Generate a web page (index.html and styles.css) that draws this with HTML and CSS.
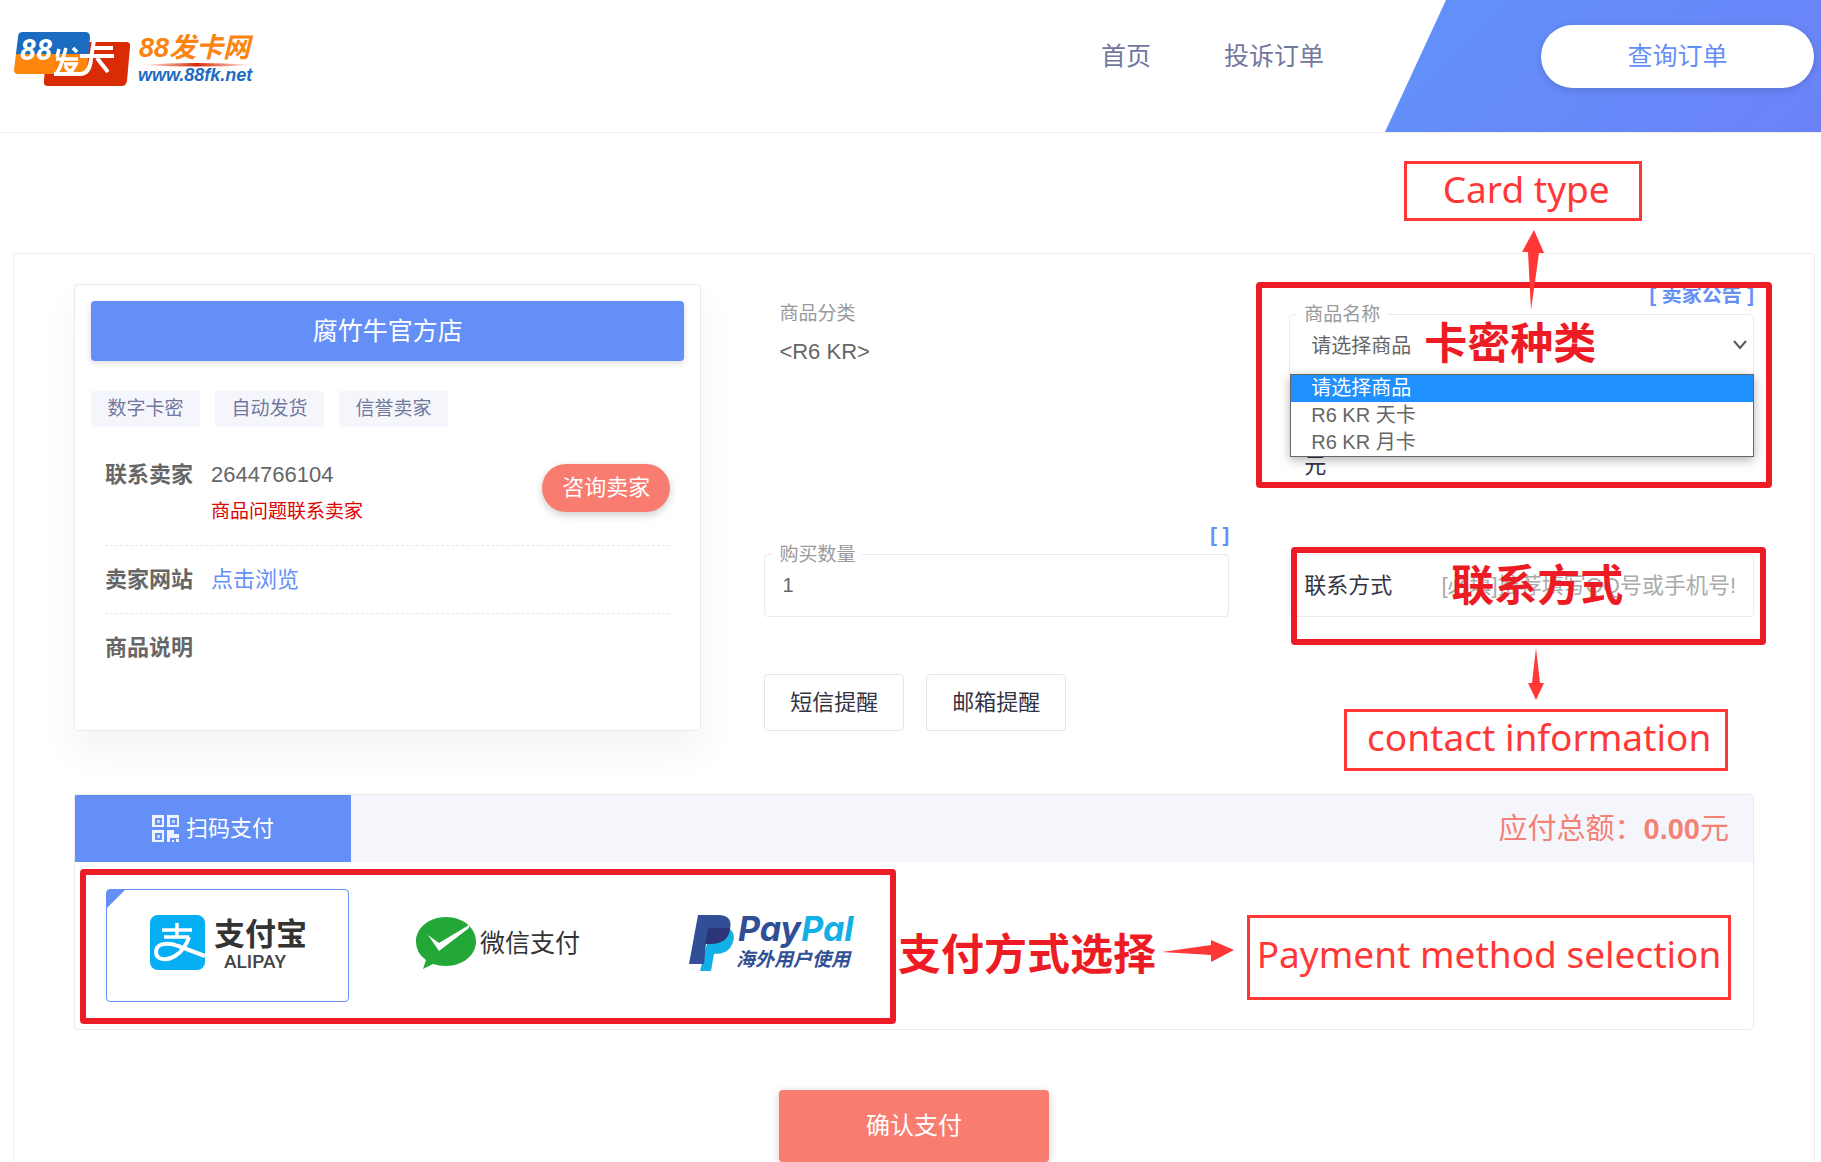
FILE: index.html
```html
<!DOCTYPE html>
<html lang="zh-CN">
<head>
  <meta charset="UTF-8">
  <meta name="viewport" content="width=device-width, initial-scale=1">
  <title>88发卡网</title>
  <link rel="stylesheet" href="styles.css">
</head>
<body>
  <header class="header">
    <a class="logo" href="#">
      <svg width="244" height="58" viewBox="0 0 244 58" role="img" aria-label="88发卡网">
        <defs>
          <linearGradient id="logo-line">
            <stop offset="0" stop-color="#fff"/>
            <stop offset="0.5" stop-color="#d92b04"/>
            <stop offset="1" stop-color="#fff"/>
          </linearGradient>
          <clipPath id="logo-tile"><path d="M9 2h62q5 0 5 5l-3 33q0 4-5 4H4q-4 0-4-4L4 7q0-5 5-5z"/></clipPath>
        </defs>
        <path d="M41 12h71q5 0 4 5l-3 34q-1 5-5 5H34q-5 0-4-5l2-28z" fill="#d92b04"/>
        <g clip-path="url(#logo-tile)">
          <path d="M0 0h80v24H0z" fill="#1b6cc0"/>
          <path d="M0 24h80v22H0z" fill="#ff860d"/>
        </g>
        <text class="logo-num" x="6" y="30">88</text>
        <path d="M45 19l-2 8M52 18l-4 14q-2 7-6 12M42 29h22M50 34h12q-3 7-10 10M51 36q4 6 10 8M59 18l4 4" fill="none" stroke="#fff" stroke-width="3.500"/>
        <path d="M80 10l-3 19q-1 14-10 15H40M77 18h22M66 26h34M83 28l11 14" fill="none" stroke="#fff" stroke-width="4"/>
        <text class="logo-name" x="125" y="27">88发卡网</text>
        <path d="M126 35q55-4 114 0q-58 3-114 0z" fill="url(#logo-line)"/>
        <text class="logo-url" x="124" y="51">www.88fk.net</text>
      </svg>
    </a>
    <nav class="nav">
      <a href="#">首页</a>
      <a href="#">投诉订单</a>
    </nav>
    <div class="header-side">
      <a class="query-btn" href="#">查询订单</a>
    </div>
  </header>

  <main class="main">
    <div class="order">
      <section class="seller">
        <h1 class="seller-name">腐竹牛官方店</h1>
        <div class="tags">
          <span class="tag">数字卡密</span>
          <span class="tag">自动发货</span>
          <span class="tag">信誉卖家</span>
        </div>
        <div class="info">
          <div class="info-row">
            <b>联系卖家</b>
            <div class="info-text">
              <span>2644766104</span>
              <small>商品问题联系卖家</small>
            </div>
            <button class="chat-btn" type="button">咨询卖家</button>
          </div>
          <div class="info-row">
            <b>卖家网站</b>
            <a href="#">点击浏览</a>
          </div>
          <div class="info-row">
            <b>商品说明</b>
          </div>
        </div>
      </section>

      <form class="fields" id="order-form">
        <div class="cell cell-top category">
          <span class="caption">商品分类</span>
          <span>&lt;R6 KR&gt;</span>
        </div>

        <div class="cell cell-top">
          <a class="notice" href="#">[ 卖家公告 ]</a>
          <div class="field">
            <label class="field-label" for="goods">商品名称</label>
            <select id="goods">
              <option>请选择商品</option>
              <option>R6 KR 天卡</option>
              <option>R6 KR 月卡</option>
            </select>
            <svg class="chevron" width="16" height="10" viewBox="0 0 16 10"><path d="M2 1l6 7 6-7" fill="none" stroke="#555" stroke-width="2"/></svg>
            <ul class="menu">
              <li class="active">请选择商品</li>
              <li>R6 KR 天卡</li>
              <li>R6 KR 月卡</li>
            </ul>
          </div>
          <div class="price">元</div>

          <div class="frame frame-goods"></div>
          <strong class="mark mark-goods">卡密种类</strong>
          <svg class="arrow arrow-goods" width="24" height="80" viewBox="0 0 24 80"><path d="M12 0l10 23h-5L9 80 6 22H0z"/></svg>
          <div class="note note-goods">Card type</div>
        </div>

        <div class="cell">
          <a class="notice" href="#">[ ]</a>
          <div class="field">
            <label class="field-label" for="count">购买数量</label>
            <input id="count" type="text" value="1">
          </div>
        </div>

        <div class="cell cell-contact">
          <div class="field field-inline">
            <label for="contact">联系方式</label>
            <input id="contact" type="text" placeholder="[必填]推荐填写QQ号或手机号!">
          </div>

          <div class="frame frame-contact"></div>
          <strong class="mark mark-contact">联系方式</strong>
          <svg class="arrow arrow-contact" width="16" height="52" viewBox="0 0 16 52"><path d="M8 0l4 35h4L8 52 0 35h4z"/></svg>
          <div class="note note-contact">contact information</div>
        </div>

        <div class="remind">
          <button type="button">短信提醒</button>
          <button type="button">邮箱提醒</button>
        </div>
      </form>
    </div>

    <section class="pay">
      <div class="pay-head">
        <button class="pay-tab" type="button">
          <svg width="27" height="27" viewBox="0 0 27 27">
            <path d="M0 0h12v12H0zM15 0h12v12H15zM0 15h12v12H0zM15 15h7v4h5v4h-9v4h-3zM20 25h2v2h-2zM24 24h3v3h-3z" fill="#eef3ff"/>
            <path d="M4 4h5v5H4zM19 4h5v5h-5zM4 19h5v5H4z" fill="#c9d8fd" stroke="#648ff7" stroke-width="2"/>
          </svg>
          扫码支付
        </button>
        <div class="total">应付总额：<b>0.00</b>元</div>
      </div>
      <div class="pay-body">
        <button class="pay-option selected" type="button">
          <svg width="156" height="58" viewBox="0 0 156 58" role="img" aria-label="支付宝">
            <rect y="1" width="55" height="55" rx="8" fill="#06aef3"/>
            <path d="M12 16h30M27 9v14M14 23h25" fill="none" stroke="#fff" stroke-width="3.500"/>
            <path d="M39 23q-4 13-14 19C15 48 6 45 6 38c0-9 12-10 22-6l27 10" fill="none" stroke="#fff" stroke-width="4"/>
            <text class="ali-name" x="64" y="31">支付宝</text>
            <text class="ali-en" x="74" y="54">ALIPAY</text>
          </svg>
        </button>
        <button class="pay-option" type="button">
          <svg width="168" height="52" viewBox="0 0 168 52" role="img" aria-label="微信支付">
            <path d="M30 0c17 0 30 11 30 24.500S47 49 30 49q-7 0-13-2L7 52l3-9Q0 36 0 24.500C0 11 13 0 30 0z" fill="#23a736"/>
            <path d="M12 18l11 8L53 8v3L23 34z" fill="#fff"/>
            <text class="wx-name" x="64" y="35">微信支付</text>
          </svg>
        </button>
        <button class="pay-option" type="button">
          <svg width="166" height="78" viewBox="0 -10 166 78" role="img" aria-label="PayPal">
            <path d="M22 14h17c6 3 7 9 5 14-3 9-9 12-19 12l-3 17H11z" fill="#12b0e6"/>
            <path d="M9 1h20c11 0 14 6 12 14-2 11-10 15-24 15l-2 20H0z" fill="#314f96"/>
            <path d="M19 14h22c-1 12-8 16-22 16h-3z" fill="#2b3577"/>
            <text class="pp-name" x="49" y="27"><tspan fill="#314f96">Pay</tspan><tspan fill="#12b0e6">Pal</tspan></text>
            <text class="pp-sub" x="47" y="52">海外用户使用</text>
          </svg>
        </button>
        <div class="frame frame-pay"></div>
        <strong class="mark mark-pay">支付方式选择</strong>
        <svg class="arrow arrow-pay" width="72" height="22" viewBox="0 0 72 22"><path d="M0 12l49-7V0l23 10-23 12v-7z"/></svg>
        <div class="note note-pay">Payment method selection</div>
      </div>
    </section>

    <button class="submit-btn" type="submit" form="order-form">确认支付</button>
  </main>
</body>
</html>
```
FILE: styles.css
```css
* {
  box-sizing: border-box;
}

body {
  margin: 0;
  background: #fff;
  color: #666;
  font-family: "Liberation Sans", "Noto Sans CJK SC", sans-serif;
  font-size: 22px;
  line-height: 30px;
}

a {
  color: #648ff7;
  text-decoration: none;
}

button,
input,
select {
  font: inherit;
  color: inherit;
}

button {
  padding: 0;
  border: none;
  cursor: pointer;
}

/* header */
.header {
  display: flex;
  height: 133px;
  border-bottom: 1px solid #eee;
}

.logo {
  margin: 30px auto 0 14px;
}

.logo-num {
  font-family: Roboto, sans-serif;
  font-size: 29px;
  font-weight: bold;
  font-style: italic;
  fill: #fff;
}

.logo-name {
  font-size: 27px;
  font-weight: bold;
  font-style: italic;
  fill: #fb8410;
}

.logo-url {
  font-size: 18px;
  font-weight: bold;
  font-style: italic;
  fill: #1b6cc0;
}

.nav {
  display: flex;
  gap: 73px;
  padding: 41px 61px 0 0;
  font-size: 25px;
}

.nav a {
  color: #7277a0;
}

.header-side {
  display: flex;
  justify-content: flex-end;
  width: 436px;
  padding: 25px 7px 0 0;
  background: linear-gradient(135deg, #638ff9 20%, #6c82f8);
  clip-path: polygon(61px 0, 100% 0, 100% 100%, 0 100%);
}

.query-btn {
  width: 273px;
  height: 63px;
  border-radius: 32px;
  background: #fff;
  box-shadow: 0 2px 8px rgba(0, 0, 0, 0.15);
  font-size: 25px;
  line-height: 62px;
  text-align: center;
}

/* order card */
.main {
  margin: 120px 6px 0 13px;
  padding: 30px 60px 0 60px;
  border: 1px solid #eee;
  border-bottom: none;
  border-radius: 4px 4px 0 0;
}

.order {
  display: grid;
  grid-template-columns: 627fr 989fr;
  gap: 63px;
}

.seller {
  padding: 16px;
  border: 1px solid #eaeaea;
  border-radius: 4px;
  box-shadow: 0 20px 40px rgba(0, 0, 0, 0.05);
}

.seller-name {
  margin: 0 0 30px;
  border-radius: 4px;
  background: #648ff7;
  box-shadow: 0 2px 6px rgba(0, 0, 0, 0.15);
  color: #fff;
  font-size: 25px;
  font-weight: normal;
  line-height: 60px;
  text-align: center;
}

.tags {
  display: flex;
  gap: 15px;
}

.tag {
  width: 109px;
  background: #f4f6fb;
  color: #7277a0;
  font-size: 19px;
  line-height: 36px;
  text-align: center;
}

.info {
  padding: 14px 14px 0;
}

.info-row {
  display: flex;
  gap: 18px;
  padding: 19px 0 18px;
  border-bottom: 1px dashed #e6e6e6;
}

.info-row:last-child {
  border-bottom: none;
}

.info-text {
  display: flex;
  flex-direction: column;
  gap: 7px;
}

.info-text small {
  color: #e00000;
  font-size: 19px;
}

.chat-btn {
  width: 128px;
  height: 48px;
  margin: 4px 0 0 auto;
  border-radius: 24px;
  background: #f97c71;
  box-shadow: 0 3px 8px rgba(0, 0, 0, 0.2);
  color: #fff;
}

/* form */
.fields {
  display: grid;
  grid-template-columns: 1fr 1fr;
  column-gap: 60px;
}

.cell {
  position: relative;
}

.cell-top {
  height: 240px;
}

.category {
  display: flex;
  flex-direction: column;
  gap: 8px;
  padding: 15px;
}

.caption {
  color: #999;
  font-size: 19px;
}

.notice {
  display: block;
  margin-bottom: 8px;
  font-size: 20px;
  font-weight: bold;
  line-height: 22px;
  text-align: right;
}

.field {
  position: relative;
  height: 63px;
  border: 1px solid #eaeaea;
  border-radius: 4px;
}

.field-label {
  position: absolute;
  top: -15px;
  left: 7px;
  padding: 0 7px;
  background: #fff;
  color: #999;
  font-size: 19px;
}

.field input,
.field select {
  width: 100%;
  height: 61px;
  padding: 0 17px;
  border: none;
  outline: none;
  background: transparent;
  font-size: 20px;
  appearance: none;
}

.field select {
  padding: 0 21px;
}

.field input::placeholder {
  color: #aaa;
  opacity: 1;
}

.chevron {
  position: absolute;
  top: 25px;
  right: 5px;
}

.field-inline {
  display: flex;
  align-items: center;
  padding-left: 14px;
}

.field-inline label {
  flex: none;
  color: #334;
}

.field-inline input {
  font-size: 22px;
  text-align: right;
}

.cell-contact {
  align-self: end;
}

.menu {
  position: absolute;
  z-index: 1;
  top: 59px;
  left: 0;
  right: -1px;
  margin: 0;
  padding: 0;
  border: 1px solid #666;
  background: #fff;
  box-shadow: 0 3px 10px rgba(0, 0, 0, 0.3);
  font-size: 20px;
  line-height: 27px;
  list-style: none;
}

.menu li {
  padding-left: 20px;
}

.menu .active {
  background: #1e90ff;
  color: #fff;
}

.price {
  margin: 74px 0 0 15px;
  color: #334;
}

.remind {
  display: flex;
  gap: 22px;
  margin-top: 57px;
}

.remind button {
  width: 140px;
  height: 57px;
  border: 1px solid #e6e6e6;
  border-radius: 4px;
  background: #fff;
  color: #334;
}

/* payment */
.pay {
  margin-top: 63px;
  border: 1px solid #eaeaea;
  border-radius: 4px;
}

.pay-head {
  display: flex;
  justify-content: space-between;
  height: 67px;
  background: #f4f6fb;
}

.pay-tab {
  display: flex;
  align-items: center;
  justify-content: center;
  gap: 7px;
  width: 276px;
  background: #648ff7;
  color: #fff;
}

.total {
  padding-right: 24px;
  color: #f48176;
  font-size: 29px;
  line-height: 68px;
}

.pay-body {
  position: relative;
  display: flex;
  gap: 29px;
  padding: 27px 31px;
}

.pay-option {
  position: relative;
  display: flex;
  align-items: center;
  justify-content: center;
  width: 243px;
  height: 113px;
  padding-bottom: 6px;
  border: 1px solid transparent;
  border-radius: 4px;
  background: #fff;
}

.pay-option.selected {
  border-color: #648ff7;
}

.selected::before {
  content: "";
  position: absolute;
  top: 0;
  left: 0;
  border-top: 18px solid #648ff7;
  border-right: 18px solid transparent;
}

.ali-name {
  font-size: 31px;
  font-weight: bold;
  fill: #333;
}

.ali-en {
  font-family: Roboto, sans-serif;
  font-size: 19px;
  font-weight: 500;
  fill: #444;
}

.wx-name {
  font-size: 25px;
  fill: #333;
}

.pp-name {
  font-family: Inter, sans-serif;
  font-size: 34px;
  font-weight: bold;
  font-style: italic;
}

.pp-sub {
  font-size: 19px;
  font-weight: bold;
  font-style: italic;
  fill: #314f96;
}

.submit-btn {
  display: block;
  width: 270px;
  height: 72px;
  margin: 60px auto 0 705px;
  border-radius: 4px;
  background: #f97c71;
  box-shadow: 0 2px 8px rgba(0, 0, 0, 0.2);
  color: #fff;
  font-size: 24px;
}

/* guide marks drawn over the page */
.frame,
.mark,
.arrow,
.note {
  position: absolute;
  z-index: 2;
}

.frame {
  border: 6px solid #ed1c24;
  border-radius: 4px;
}

.mark {
  color: #ed1c24;
  font-size: 43px;
  font-weight: bold;
  line-height: 50px;
  white-space: nowrap;
}

.arrow {
  fill: #ff3737;
}

.note {
  border: 3px solid #ff3737;
  color: #ff3737;
  font-family: "Noto Sans", sans-serif;
  font-size: 37px;
  text-align: center;
  white-space: nowrap;
}

.frame-goods {
  top: -2px;
  left: -33px;
  right: -18px;
  height: 206px;
}

.mark-goods {
  top: 35px;
  left: 135px;
}

.arrow-goods {
  top: -54px;
  left: 233px;
}

.note-goods {
  top: -123px;
  left: 115px;
  width: 238px;
  height: 60px;
  padding-left: 6px;
  line-height: 50px;
}

.frame-contact {
  top: -7px;
  left: 2px;
  right: -12px;
  height: 98px;
}

.mark-contact {
  top: 7px;
  left: 162px;
}

.arrow-contact {
  top: 94px;
  left: 239px;
}

.note-contact {
  top: 155px;
  left: 55px;
  width: 384px;
  height: 62px;
  padding-left: 6px;
  line-height: 50px;
}

.frame-pay {
  top: 7px;
  left: 5px;
  width: 816px;
  height: 155px;
}

.mark-pay {
  top: 68px;
  left: 823px;
}

.arrow-pay {
  top: 78px;
  left: 1087px;
}

.note-pay {
  top: 53px;
  left: 1172px;
  width: 484px;
  height: 85px;
  line-height: 71px;
}
```
